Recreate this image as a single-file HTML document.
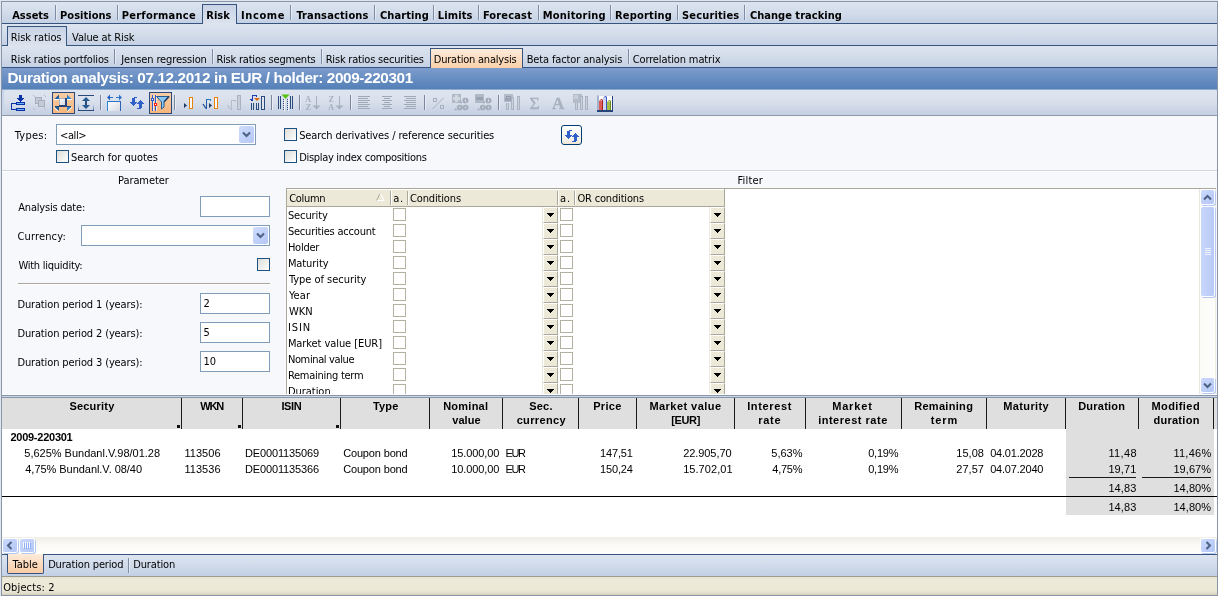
<!DOCTYPE html><html><head><meta charset='utf-8'><title>Duration analysis</title><style>
html,body{margin:0;padding:0;}
body{width:1218px;height:596px;overflow:hidden;background:#fff;position:relative;}
#root{will-change:transform;position:absolute;left:0;top:0;width:1218px;height:596px;overflow:hidden;background:#fff;}
.a{position:absolute;}
.t{position:absolute;white-space:nowrap;line-height:13px;font-size:11px;color:#000;font-family:'DejaVu Sans Condensed','DejaVu Sans','Liberation Sans',sans-serif;letter-spacing:-0.1px;}
.tb{position:absolute;white-space:nowrap;line-height:13px;font-size:11px;color:#000;font-weight:bold;font-family:'DejaVu Sans Condensed','DejaVu Sans','Liberation Sans',sans-serif;letter-spacing:0.2px;}
.ar{position:absolute;white-space:nowrap;line-height:13px;font-size:11px;color:#000;font-family:'Liberation Sans',sans-serif;}
.arb{position:absolute;white-space:nowrap;line-height:13px;font-size:11px;color:#000;font-weight:bold;font-family:'Liberation Sans',sans-serif;letter-spacing:0.4px;}
.r{text-align:right;}
.c{text-align:center;}
.band{position:absolute;left:2px;width:1215px;height:21px;background:linear-gradient(#dce4ef,#d2dcea 50%,#c4d0e4);}
.dl{position:absolute;left:2px;width:1215px;height:1px;background:#37547f;}
.sep{position:absolute;width:1px;height:15px;background:#7e8ca6;box-shadow:1px 0 0 rgba(255,255,255,.45);}
.inp{position:absolute;box-sizing:border-box;border:1px solid #7f9db9;background:#fff;}
.cb{position:absolute;box-sizing:border-box;width:13px;height:13px;border:1px solid #1c5180;background:linear-gradient(135deg,#dcdcd7,#ffffff);}
.gcb{position:absolute;box-sizing:border-box;width:13px;height:13px;border:1px solid #b4b1a1;background:#fff;}
.dd{position:absolute;width:15px;height:17px;border-radius:2px;background:linear-gradient(135deg,#cfdcfd,#b4c7f5);}
.gdd{position:absolute;box-sizing:border-box;width:15px;height:16px;background:#ece9d8;border-left:1px solid #fff;border-top:1px solid #fff;border-bottom:1px solid #aca899;border-right:1px solid #aca899;box-shadow:-1px 0 0 #ece9d8;}
.hs{position:absolute;top:398px;width:1px;height:31px;background:#1a1a1a;}
.mk{position:absolute;top:425px;width:3px;height:3px;background:#111;}
svg{position:absolute;overflow:visible;}
</style></head><body><div id='root'>
<div class='a' style='left:0px;top:0px;width:1218px;height:596px;background:#dfe5ef;'></div>
<div class='a' style='left:1px;top:1px;width:1217px;height:595px;background:#8a96a8;'></div>
<div class='a' style='left:2px;top:2px;width:1215px;height:593px;background:#fff;'></div>
<div class='band' style='top:2px'></div>
<div class='dl' style='top:23px'></div>
<div class='band' style='top:24px'></div>
<div class='dl' style='top:45px'></div>
<div class='band' style='top:46px'></div>
<div class='dl' style='top:67px'></div>
<div class='a' style='left:202px;top:4px;width:35px;height:20px;box-sizing:border-box;border:1px solid #37547f;border-bottom:none;border-radius:0;background:linear-gradient(#c8d3e5,#dce3ee)'></div>
<div class='tb' style='left:12.2px;letter-spacing:0.0px;top:9px;'>Assets</div>
<div class='tb' style='left:60.0px;letter-spacing:0.038px;top:9px;'>Positions</div>
<div class='tb' style='left:121.8px;letter-spacing:0.24px;top:9px;'>Performance</div>
<div class='tb' style='left:206.3px;letter-spacing:0.033px;top:9px;'>Risk</div>
<div class='tb' style='left:241.0px;letter-spacing:0.62px;top:9px;'>Income</div>
<div class='tb' style='left:296.4px;letter-spacing:0.145px;top:9px;'>Transactions</div>
<div class='tb' style='left:380.0px;letter-spacing:0.086px;top:9px;'>Charting</div>
<div class='tb' style='left:437.8px;letter-spacing:0.12px;top:9px;'>Limits</div>
<div class='tb' style='left:482.9px;letter-spacing:0.157px;top:9px;'>Forecast</div>
<div class='tb' style='left:542.8px;letter-spacing:0.2px;top:9px;'>Monitoring</div>
<div class='tb' style='left:614.9px;letter-spacing:0.2px;top:9px;'>Reporting</div>
<div class='tb' style='left:682.0px;letter-spacing:0.156px;top:9px;'>Securities</div>
<div class='tb' style='left:749.9px;letter-spacing:0.029px;top:9px;'>Change tracking</div>
<div class='sep' style='left:55px;top:5px'></div>
<div class='sep' style='left:117px;top:5px'></div>
<div class='sep' style='left:290px;top:5px'></div>
<div class='sep' style='left:374px;top:5px'></div>
<div class='sep' style='left:433px;top:5px'></div>
<div class='sep' style='left:478px;top:5px'></div>
<div class='sep' style='left:538px;top:5px'></div>
<div class='sep' style='left:610px;top:5px'></div>
<div class='sep' style='left:677px;top:5px'></div>
<div class='sep' style='left:744px;top:5px'></div>
<div class='a' style='left:7px;top:26px;width:60px;height:20px;box-sizing:border-box;border:1px solid #37547f;border-bottom:none;border-radius:0;background:linear-gradient(#c8d3e5,#dce3ee)'></div>
<div class='a' style='left:8px;top:45px;width:58px;height:1px;background:#dde4ef;'></div>
<div class='a' style='left:203px;top:23px;width:33px;height:1px;background:#dde4ef;'></div>
<div class='t' style='left:10.8px;letter-spacing:-0.09px;top:31px;'>Risk ratios</div>
<div class='t' style='left:72.1px;letter-spacing:-0.125px;top:31px;'>Value at Risk</div>
<div class='a' style='left:430px;top:48px;width:93px;height:20px;box-sizing:border-box;border:1px solid #37547f;border-bottom:none;border-radius:0;background:linear-gradient(#fdecdc,#f9cfa9)'></div>
<div class='t' style='left:10.8px;letter-spacing:-0.148px;top:53px;'>Risk ratios portfolios</div>
<div class='t' style='left:121.3px;letter-spacing:-0.119px;top:53px;'>Jensen regression</div>
<div class='t' style='left:216.4px;letter-spacing:-0.211px;top:53px;'>Risk ratios segments</div>
<div class='t' style='left:325.7px;letter-spacing:-0.195px;top:53px;'>Risk ratios securities</div>
<div class='t' style='left:433.8px;letter-spacing:-0.212px;top:53px;'>Duration analysis</div>
<div class='t' style='left:526.7px;letter-spacing:-0.132px;top:53px;'>Beta factor analysis</div>
<div class='t' style='left:632.7px;letter-spacing:-0.124px;top:53px;'>Correlation matrix</div>
<div class='sep' style='left:114px;top:49px'></div>
<div class='sep' style='left:212px;top:49px'></div>
<div class='sep' style='left:321px;top:49px'></div>
<div class='sep' style='left:628px;top:49px'></div>
<div class='a' style='left:2px;top:68px;width:1215px;height:21px;background:linear-gradient(#7c9ccc,#5480b8);'></div>
<div class='a' style='left:7.4px;letter-spacing:-0.368px;top:69px;line-height:17px;font-size:15.3px;font-weight:bold;color:#fff;white-space:nowrap;font-family:"Liberation Sans",sans-serif'>Duration analysis: 07.12.2012 in EUR / holder: 2009-220301</div>
<div class='a' style='left:2px;top:89px;width:1215px;height:27px;background:#c9d6ea;'></div>
<div class='a' style='left:2px;top:89px;width:1215px;height:1px;background:#8fa9d0;'></div>
<div class='a' style='left:4px;top:90px;width:1213px;height:25px;border-radius:3px;background:linear-gradient(#dfe5ef,#d9e0ec 45%,#c4cfe2)'></div>
<div class='a' style='left:2px;top:115px;width:1215px;height:1px;background:#8f99aa;'></div>
<svg style='left:0;top:0' width='1218' height='120' viewBox='0 0 1218 120'><defs><linearGradient id='og' x1='0' y1='0' x2='0' y2='1'><stop offset='0' stop-color='#f7cda6'/><stop offset='1' stop-color='#f8b57c'/></linearGradient><linearGradient id='wg' x1='0' y1='0' x2='1' y2='1'><stop offset='0' stop-color='#ffffff'/><stop offset='1' stop-color='#d5d8e2'/></linearGradient><linearGradient id='bf' x1='0' y1='0' x2='0' y2='1'><stop offset='0' stop-color='#aac0e8' stop-opacity='0'/><stop offset='1' stop-color='#2b4a7c'/></linearGradient></defs><g shape-rendering='crispEdges'><rect x='100' y='95' width='1' height='15' fill='#7b879c' /><rect x='101' y='95' width='1' height='15' fill='#e8edf5' /><rect x='174' y='95' width='1' height='15' fill='#7b879c' /><rect x='175' y='95' width='1' height='15' fill='#e8edf5' /><rect x='271' y='95' width='1' height='15' fill='#7b879c' /><rect x='272' y='95' width='1' height='15' fill='#e8edf5' /><rect x='299' y='95' width='1' height='15' fill='#7b879c' /><rect x='300' y='95' width='1' height='15' fill='#e8edf5' /><rect x='350' y='95' width='1' height='15' fill='#7b879c' /><rect x='351' y='95' width='1' height='15' fill='#e8edf5' /><rect x='424' y='95' width='1' height='15' fill='#7b879c' /><rect x='425' y='95' width='1' height='15' fill='#e8edf5' /><rect x='498' y='95' width='1' height='15' fill='#7b879c' /><rect x='499' y='95' width='1' height='15' fill='#e8edf5' /><rect x='52' y='92' width='23' height='22' fill='#2b4a7c' /><rect x='53' y='93' width='21' height='20' fill='url(#og)' /><rect x='149' y='92' width='23' height='22' fill='#2b4a7c' /><rect x='150' y='93' width='21' height='20' fill='url(#og)' /><rect x='19' y='95' width='3' height='3' fill='#0a32a8' /><path d='M17 98 h7 l-3.5 4 z' fill='#0a32a8' stroke='none' stroke-width='1' /><rect x='20' y='98' width='1' height='4' fill='#0a32a8' /><rect x='16' y='102' width='9' height='3' fill='#0a32a8' /><rect x='17' y='103' width='7' height='1' fill='#6fb0ff' /><rect x='16' y='108' width='9' height='3' fill='#0a32a8' /><rect x='17' y='109' width='7' height='1' fill='#6fb0ff' /><rect x='11' y='103' width='5' height='1' fill='#0a32a8' /><rect x='11' y='103' width='1' height='7' fill='#0a32a8' /><rect x='11' y='109' width='5' height='1' fill='#0a32a8' /><rect x='35' y='97' width='7' height='7' fill='#a5aebc' /><rect x='36' y='98' width='5' height='5' fill='#c4cbd6' /><rect x='38' y='100' width='7' height='7' fill='#a5aebc' /><rect x='39' y='101' width='5' height='5' fill='#c4cbd6' /><rect x='38' y='100' width='4' height='1' fill='#a5aebc' /><rect x='38' y='100' width='1' height='4' fill='#a5aebc' /><rect x='33' y='95' width='1' height='1' fill='#b3bbc8' /><rect x='34' y='96' width='1' height='1' fill='#b3bbc8' /><rect x='44' y='95' width='1' height='1' fill='#b3bbc8' /><rect x='45' y='96' width='1' height='1' fill='#b3bbc8' /><rect x='33' y='108' width='1' height='1' fill='#b3bbc8' /><rect x='34' y='109' width='1' height='1' fill='#b3bbc8' /><rect x='44' y='108' width='1' height='1' fill='#b3bbc8' /><rect x='45' y='109' width='1' height='1' fill='#b3bbc8' /><rect x='59' y='98' width='8' height='9' fill='#27457a' /><rect x='59' y='98' width='6' height='7' fill='url(#wg)' /><rect x='59' y='98' width='6' height='1' fill='#a9b4c8' /><rect x='59' y='98' width='1' height='7' fill='#a9b4c8' /><rect x='55' y='106' width='4' height='1' fill='#27457a' /><rect x='67' y='106' width='4' height='1' fill='#27457a' /><rect x='54' y='99' width='5' height='1' fill='#ffffff' /><rect x='67' y='99' width='5' height='1' fill='#ffffff' /></g><path d='M59 94.5 v4.5 h-4.5 z' fill='#1d5f9e' stroke='none' stroke-width='1' /><path d='M67 94.5 v4.5 h4.5 z' fill='#2a86c8' stroke='none' stroke-width='1' /><path d='M54.5 107 h4.5 v4 z' fill='#1d5f9e' stroke='none' stroke-width='1' /><path d='M71.5 107 h-4.5 v4 z' fill='#2a86c8' stroke='none' stroke-width='1' /><path d='M54 107.5 l4.5 4' fill='none' stroke='#fff' stroke-width='1' /><path d='M72 107.5 l-4.5 4' fill='none' stroke='#fff' stroke-width='1' /><g shape-rendering='crispEdges'><rect x='78' y='95' width='16' height='1' fill='#2b4a7c' /><rect x='85' y='99' width='2' height='8' fill='#2b4a7c' /></g><path d='M86 97 l4 4 h-8 z' fill='#24588f' stroke='none' stroke-width='1' /><path d='M86 109 l4 -4 h-8 z' fill='#24588f' stroke='none' stroke-width='1' /><g shape-rendering='crispEdges'><rect x='78' y='103' width='1' height='8' fill='url(#bf)' /><rect x='93' y='103' width='1' height='8' fill='url(#bf)' /><rect x='78' y='110' width='16' height='1' fill='#2b4a7c' /><rect x='107' y='101' width='14' height='1' fill='#2a74c6' /><rect x='107' y='101' width='1' height='10' fill='#2a8ad6' /><rect x='120' y='101' width='1' height='10' fill='#2a62b6' /><rect x='108' y='102' width='12' height='9' fill='url(#wg)' /><rect x='108' y='97' width='5' height='1' fill='#2a74c6' /><rect x='116' y='97' width='5' height='1' fill='#2a74c6' /></g><path d='M107 97.5 l3 -3 v6 z' fill='#2a62c0' stroke='none' stroke-width='1' /><path d='M122 97.5 l-3 -3 v6 z' fill='#2a74c6' stroke='none' stroke-width='1' /><g shape-rendering='crispEdges'><rect x='134' y='97' width='3' height='1' fill='#2f5fc8'/><rect x='132' y='98' width='3' height='4' fill='#2f5fc8'/><rect x='130' y='102' width='7' height='1' fill='#2f5fc8'/><rect x='131' y='103' width='5' height='1' fill='#2f5fc8'/><rect x='132' y='104' width='3' height='1' fill='#2f5fc8'/><rect x='133' y='105' width='1' height='1' fill='#2f5fc8'/><rect x='140' y='100' width='1' height='1' fill='#2f5fc8'/><rect x='139' y='101' width='3' height='1' fill='#2f5fc8'/><rect x='138' y='102' width='5' height='1' fill='#2f5fc8'/><rect x='137' y='103' width='7' height='1' fill='#2f5fc8'/><rect x='139' y='104' width='3' height='4' fill='#2f5fc8'/><rect x='137' y='108' width='4' height='1' fill='#2f5fc8'/></g><g shape-rendering='crispEdges'><rect x='152' y='95' width='1' height='16' fill='#2a5ad0' /><rect x='153' y='95' width='1' height='16' fill='#fbe6d2' /><rect x='155' y='95' width='1' height='16' fill='#2a5ad0' /><rect x='156' y='95' width='1' height='16' fill='#fbe6d2' /><rect x='151' y='98' width='3' height='3' fill='#2a5ad0' /><rect x='152' y='99' width='1' height='1' fill='#fff' /><rect x='154' y='103' width='3' height='3' fill='#ff2010' /><rect x='155' y='104' width='1' height='1' fill='#fff' /></g><path d='M156.5 96.5 h12.5 l-5 5.5 v5 l-2.5 2 v-7 z' fill='#8cc6f2' stroke='#235a92' stroke-width='1' /><path d='M164 102 l5 -5.5' fill='none' stroke='#1a3a66' stroke-width='1.5' /><g shape-rendering='crispEdges'><rect x='189' y='97' width='4' height='12' fill='#e8820c' /><rect x='190' y='98' width='2' height='10' fill='#fbfbff' /></g><path d='M184 103 l3 2.5 l-3 2.5 z' fill='#1f3a68' stroke='none' stroke-width='1' /><g shape-rendering='crispEdges'><rect x='214' y='97' width='4' height='12' fill='#e8820c' /><rect x='215' y='98' width='2' height='10' fill='#fbfbff' /><rect x='206' y='99' width='1' height='10' fill='#1f5aa8' /><rect x='206' y='99' width='5' height='1' fill='#1f7ab8' /><rect x='210' y='99' width='1' height='2' fill='#1f7ab8' /></g><path d='M203 104 l3 4.5' fill='none' stroke='#1f4a98' stroke-width='1.3' /><path d='M209 103 l3 2.5 l-3 2.5 z' fill='#1f3a68' stroke='none' stroke-width='1' /><g shape-rendering='crispEdges'><rect x='231' y='100' width='1' height='10' fill='#b4bcc8' /><rect x='231' y='100' width='5' height='1' fill='#b4bcc8' /><rect x='235' y='100' width='1' height='2' fill='#b4bcc8' /><rect x='237' y='95' width='4' height='15' fill='#aab3c1' /><rect x='238' y='96' width='2' height='13' fill='#c8ced9' /></g><path d='M227.5 105 l3 4.5' fill='none' stroke='#b4bcc8' stroke-width='1.2' /><g shape-rendering='crispEdges'><rect x='251' y='103' width='1' height='7' fill='#2b4a7c' /><rect x='253' y='103' width='1' height='7' fill='#2b4a7c' /><rect x='256' y='103' width='1' height='7' fill='#2b4a7c' /><rect x='258' y='103' width='1' height='7' fill='#2b4a7c' /><rect x='256' y='109' width='3' height='1' fill='#2b4a7c' /><rect x='261' y='96' width='4' height='14' fill='#2b4a7c' /><rect x='262' y='97' width='2' height='12' fill='#dfe5f0' /><rect x='252' y='95' width='1' height='6' fill='#1a3ab8' /><rect x='252' y='95' width='5' height='1' fill='#1a3ab8' /><rect x='256' y='95' width='1' height='2' fill='#1a3ab8' /><rect x='250' y='99' width='2' height='1' fill='#1a3ab8' /><rect x='251' y='100' width='1' height='1' fill='#1a3ab8' /></g><path d='M254 98 h6 l-3 3 z' fill='#d8690c' stroke='none' stroke-width='1' /><g shape-rendering='crispEdges'><rect x='278' y='96' width='1' height='13' fill='#2b4a7c' /><rect x='280' y='96' width='1' height='13' fill='#2b4a7c' /><rect x='290' y='96' width='1' height='13' fill='#2b4a7c' /><rect x='292' y='96' width='1' height='13' fill='#2b4a7c' /><rect x='283' y='99' width='1' height='1' fill='#2b4a7c' /><rect x='283' y='101' width='1' height='1' fill='#2b4a7c' /><rect x='283' y='103' width='1' height='1' fill='#2b4a7c' /><rect x='283' y='105' width='1' height='1' fill='#2b4a7c' /><rect x='283' y='107' width='1' height='1' fill='#2b4a7c' /><rect x='283' y='109' width='1' height='1' fill='#2b4a7c' /><rect x='284' y='98' width='1' height='13' fill='#f4f6fa' /><rect x='287' y='99' width='1' height='1' fill='#2b4a7c' /><rect x='287' y='101' width='1' height='1' fill='#2b4a7c' /><rect x='287' y='103' width='1' height='1' fill='#2b4a7c' /><rect x='287' y='105' width='1' height='1' fill='#2b4a7c' /><rect x='287' y='107' width='1' height='1' fill='#2b4a7c' /><rect x='287' y='109' width='1' height='1' fill='#2b4a7c' /><rect x='288' y='98' width='1' height='13' fill='#f4f6fa' /></g><path d='M281.5 94.5 h8 l-4 4.5 z' fill='#55c010' stroke='none' stroke-width='1' /><text x='305' y='101.5' font-family="Liberation Serif" font-size='8.5' font-weight='bold' fill='#a7b0be' >A</text><text x='305.5' y='109.5' font-family="Liberation Serif" font-size='8.5' font-weight='bold' fill='#a7b0be' >Z</text><text x='328.5' y='101.5' font-family="Liberation Serif" font-size='8.5' font-weight='bold' fill='#a7b0be' >Z</text><text x='328' y='109.5' font-family="Liberation Serif" font-size='8.5' font-weight='bold' fill='#a7b0be' >A</text><rect x='316' y='96' width='1' height='10' fill='#a7b0be' shape-rendering='crispEdges'/><path d='M312.5 105.5 h8 l-4 4 z' fill='#a7b0be' stroke='none' stroke-width='1' /><rect x='339' y='96' width='1' height='10' fill='#a7b0be' shape-rendering='crispEdges'/><path d='M335.5 105.5 h8 l-4 4 z' fill='#a7b0be' stroke='none' stroke-width='1' /><g shape-rendering='crispEdges'><rect x='358' y='96' width='12' height='1' fill='#9ea8b7' /><rect x='382' y='96' width='10' height='1' fill='#9ea8b7' /><rect x='404' y='96' width='12' height='1' fill='#9ea8b7' /><rect x='358' y='98' width='10' height='1' fill='#9ea8b7' /><rect x='384' y='98' width='6' height='1' fill='#9ea8b7' /><rect x='406' y='98' width='10' height='1' fill='#9ea8b7' /><rect x='358' y='100' width='12' height='1' fill='#9ea8b7' /><rect x='382' y='100' width='10' height='1' fill='#9ea8b7' /><rect x='404' y='100' width='12' height='1' fill='#9ea8b7' /><rect x='358' y='102' width='10' height='1' fill='#9ea8b7' /><rect x='384' y='102' width='6' height='1' fill='#9ea8b7' /><rect x='406' y='102' width='10' height='1' fill='#9ea8b7' /><rect x='358' y='104' width='12' height='1' fill='#9ea8b7' /><rect x='382' y='104' width='10' height='1' fill='#9ea8b7' /><rect x='404' y='104' width='12' height='1' fill='#9ea8b7' /><rect x='358' y='106' width='10' height='1' fill='#9ea8b7' /><rect x='384' y='106' width='6' height='1' fill='#9ea8b7' /><rect x='406' y='106' width='10' height='1' fill='#9ea8b7' /><rect x='358' y='108' width='12' height='1' fill='#9ea8b7' /><rect x='382' y='108' width='10' height='1' fill='#9ea8b7' /><rect x='404' y='108' width='12' height='1' fill='#9ea8b7' /></g><path d='M432.5 109 l11 -11' fill='none' stroke='#a7b0be' stroke-width='1' /><rect x='433.5' y='98.5' width='3' height='3' fill='none' stroke='#a7b0be'/><rect x='440.5' y='105.5' width='3' height='3' fill='none' stroke='#a7b0be'/><rect x='452' y='94' width='9' height='9' fill='#b0b9c6' shape-rendering='crispEdges'/><rect x='453' y='97' width='7' height='3' fill='#d2d8e1' shape-rendering='crispEdges'/><rect x='455' y='95' width='3' height='7' fill='#d2d8e1' shape-rendering='crispEdges'/><text x='460' y='102.8' font-family="Liberation Sans" font-size='8' font-weight='bold' fill='#a3acba' stroke='#a3acba' stroke-width='0.7'>.</text><text x='462.5' y='102.8' font-family="Liberation Sans" font-size='8' font-weight='bold' fill='#a3acba' stroke='#a3acba' stroke-width='0.7' textLength='6' lengthAdjust='spacingAndGlyphs'>0</text><text x='454.5' y='110.3' font-family="Liberation Sans" font-size='8' font-weight='bold' fill='#a3acba' stroke='#a3acba' stroke-width='0.7'>.</text><text x='457' y='110.3' font-family="Liberation Sans" font-size='8' font-weight='bold' fill='#a3acba' stroke='#a3acba' stroke-width='0.7' textLength='11.5' lengthAdjust='spacingAndGlyphs'>00</text><rect x='475' y='94' width='9' height='9' fill='#b0b9c6' shape-rendering='crispEdges'/><rect x='476' y='97' width='7' height='3' fill='#98a2b2' shape-rendering='crispEdges'/><text x='483' y='102.8' font-family="Liberation Sans" font-size='8' font-weight='bold' fill='#a3acba' stroke='#a3acba' stroke-width='0.7'>.</text><text x='485.5' y='102.8' font-family="Liberation Sans" font-size='8' font-weight='bold' fill='#a3acba' stroke='#a3acba' stroke-width='0.7' textLength='6' lengthAdjust='spacingAndGlyphs'>0</text><text x='477.5' y='110.3' font-family="Liberation Sans" font-size='8' font-weight='bold' fill='#a3acba' stroke='#a3acba' stroke-width='0.7'>.</text><text x='480' y='110.3' font-family="Liberation Sans" font-size='8' font-weight='bold' fill='#a3acba' stroke='#a3acba' stroke-width='0.7' textLength='11.5' lengthAdjust='spacingAndGlyphs'>00</text><g shape-rendering='crispEdges'><rect x='504' y='94' width='9' height='8' fill='#b4bcc9' /><rect x='506' y='96' width='5' height='1' fill='#8f99a9' /><rect x='506' y='96' width='1' height='3' fill='#8f99a9' /><rect x='510' y='96' width='1' height='3' fill='#8f99a9' /><rect x='505' y='98' width='7' height='3' fill='#9aa4b3' /><rect x='506' y='103' width='3' height='7' fill='#aab3c1' /><rect x='507' y='103' width='1' height='6' fill='#cbd1db' /><rect x='511' y='97' width='3' height='13' fill='#aab3c1' /><rect x='512' y='98' width='1' height='11' fill='#cbd1db' /><rect x='517' y='96' width='3' height='14' fill='#aab3c1' /><rect x='518' y='97' width='1' height='12' fill='#cbd1db' /><rect x='573' y='94' width='9' height='9' fill='#b4bcc9' /><rect x='574' y='95' width='4' height='4' fill='#c9cfd9' /><rect x='575' y='103' width='3' height='7' fill='#aab3c1' /><rect x='576' y='103' width='1' height='6' fill='#cbd1db' /><rect x='580' y='96' width='3' height='14' fill='#aab3c1' /><rect x='581' y='97' width='1' height='12' fill='#cbd1db' /><rect x='585' y='96' width='3' height='14' fill='#aab3c1' /><rect x='586' y='97' width='1' height='12' fill='#cbd1db' /></g><text x='529.5' y='108.6' font-family="Liberation Serif" font-size='17.5' font-weight='normal' fill='#a7b0be' stroke='#a7b0be' stroke-width='0.3'>&#931;</text><text x='552' y='108.8' font-family="Liberation Serif" font-size='17' font-weight='bold' fill='#a9b2c0' stroke='#a9b2c0' stroke-width='0.4'>A</text><g shape-rendering='crispEdges'><rect x='597' y='95' width='16' height='17' fill='#ffffff' /><rect x='597' y='95' width='2' height='16' fill='#a3b3cd' /><rect x='597' y='110' width='16' height='2' fill='#27457a' /><rect x='612' y='96' width='1' height='15' fill='#27457a' /><rect x='598' y='95' width='15' height='1' fill='#d5dcea' /><rect x='599' y='101' width='3' height='9' fill='#dd5a55' /><rect x='602' y='100' width='1' height='10' fill='#a82424' /><rect x='603' y='98' width='3' height='12' fill='#cdd6f6' /><rect x='606' y='97' width='1' height='13' fill='#3a56c0' /><rect x='607' y='102' width='3' height='8' fill='#a6bf45' /><rect x='610' y='101' width='1' height='9' fill='#6c861c' /></g><path d='M599 101 l2 -2 h1 l1 1 z' fill='#c23a3a' stroke='none' stroke-width='1' /><path d='M603 98 l2 -2 h1 l1 1 z' fill='#4d6ad2' stroke='none' stroke-width='1' /><path d='M607 102 l2 -2 h1 l1 1 z' fill='#86a62a' stroke='none' stroke-width='1' /></svg>
<div class='a' style='left:2px;top:116px;width:1215px;height:278px;background:#f6f8fc;'></div>
<div class='a' style='left:2px;top:170px;width:1215px;height:1px;background:#cfd6e1;'></div>
<div class='a' style='left:2px;top:171px;width:1215px;height:1px;background:#ffffff;'></div>
<div class='t' style='left:14.8px;letter-spacing:0.24px;top:129px;'>Types:</div>
<div class='inp' style='left:56px;top:124px;width:200px;height:21px'></div>
<div class='t' style='left:60.1px;letter-spacing:-0.425px;top:129px;'>&lt;all&gt;</div>
<div class='dd' style='left:239px;top:126px'></div>
<svg style='left:239px;top:126px' width='15' height='17' viewBox='0 0 15 17'><path d='M4 6.5 L7.5 10 L11 6.5' fill='none' stroke='#4d6185' stroke-width='2'/></svg>
<div class='cb' style='left:56px;top:150px'></div>
<div class='t' style='left:70.9px;letter-spacing:-0.031px;top:151px;'>Search for quotes</div>
<div class='cb' style='left:284px;top:128px'></div>
<div class='t' style='left:299.15px;letter-spacing:-0.111px;top:129px;'>Search derivatives / reference securities</div>
<div class='cb' style='left:284px;top:150px'></div>
<div class='t' style='left:299.15px;letter-spacing:-0.3px;top:151px;'>Display index compositions</div>
<div class='a' style='left:561px;top:125px;width:21px;height:20px;box-sizing:border-box;border:1px solid #003c74;border-radius:3px;background:linear-gradient(#ffffff,#f1efe6 85%,#f3e3cf)'></div>
<svg style='left:0;top:0' width='700' height='200' viewBox='0 0 700 200'><g shape-rendering='crispEdges'><rect x='569' y='130' width='3' height='1' fill='#2f5fc8'/><rect x='567' y='131' width='3' height='4' fill='#2f5fc8'/><rect x='565' y='135' width='7' height='1' fill='#2f5fc8'/><rect x='566' y='136' width='5' height='1' fill='#2f5fc8'/><rect x='567' y='137' width='3' height='1' fill='#2f5fc8'/><rect x='568' y='138' width='1' height='1' fill='#2f5fc8'/><rect x='575' y='133' width='1' height='1' fill='#2f5fc8'/><rect x='574' y='134' width='3' height='1' fill='#2f5fc8'/><rect x='573' y='135' width='5' height='1' fill='#2f5fc8'/><rect x='572' y='136' width='7' height='1' fill='#2f5fc8'/><rect x='574' y='137' width='3' height='4' fill='#2f5fc8'/><rect x='572' y='141' width='4' height='1' fill='#2f5fc8'/></g></svg>
<div class='t' style='left:118.0px;letter-spacing:-0.075px;top:174px;'>Parameter</div>
<div class='t' style='left:737.4px;letter-spacing:0.2px;top:174px;'>Filter</div>
<div class='t' style='left:18.3px;letter-spacing:-0.2px;top:201px;'>Analysis date:</div>
<div class='inp' style='left:200px;top:196px;width:70px;height:21px'></div>
<div class='t' style='left:17.4px;letter-spacing:0.162px;top:230px;'>Currency:</div>
<div class='inp' style='left:81px;top:225px;width:189px;height:21px'></div>
<div class='dd' style='left:253px;top:227px'></div>
<svg style='left:253px;top:227px' width='15' height='17' viewBox='0 0 15 17'><path d='M4 6.5 L7.5 10 L11 6.5' fill='none' stroke='#4d6185' stroke-width='2'/></svg>
<div class='t' style='left:18.4px;letter-spacing:-0.243px;top:259px;'>With liquidity:</div>
<div class='cb' style='left:257px;top:258px'></div>
<div class='a' style='left:18px;top:283px;width:252px;height:1px;background:#aca899;'></div>
<div class='a' style='left:18px;top:284px;width:252px;height:1px;background:#ffffff;'></div>
<div class='t' style='left:17.4px;letter-spacing:-0.136px;top:298px;'>Duration period 1 (years):</div>
<div class='inp' style='left:200px;top:293px;width:70px;height:21px'></div>
<div class='t' style='left:203.5px;top:297px;'>2</div>
<div class='t' style='left:17.4px;letter-spacing:-0.136px;top:327px;'>Duration period 2 (years):</div>
<div class='inp' style='left:200px;top:322px;width:70px;height:21px'></div>
<div class='t' style='left:203.5px;top:326px;'>5</div>
<div class='t' style='left:17.4px;letter-spacing:-0.136px;top:356px;'>Duration period 3 (years):</div>
<div class='inp' style='left:200px;top:351px;width:70px;height:21px'></div>
<div class='t' style='left:203.5px;top:355px;'>10</div>
<div class='a' style='left:286px;top:188px;width:930px;height:206px;overflow:hidden'>
<div class='a' style='left:0;top:0;width:930px;height:1px;background:#aca899'></div>
<div class='a' style='left:0;top:0;width:1px;height:206px;background:#aca899'></div>
<div class='a' style='left:1px;top:1px;width:912px;height:205px;background:#fff'></div>
<div class='a' style='left:1px;top:1px;width:437px;height:17px;background:#ece9d8'></div>
<div class='a' style='left:1px;top:18px;width:438px;height:1px;background:#aca899'></div>
<div class='a' style='left:438px;top:1px;width:1px;height:205px;background:#aca899'></div>
<div class='a' style='left:104px;top:3px;width:1px;height:14px;background:#aca899'></div>
<div class='a' style='left:105px;top:3px;width:1px;height:14px;background:#fff'></div>
<div class='a' style='left:121px;top:3px;width:1px;height:14px;background:#aca899'></div>
<div class='a' style='left:122px;top:3px;width:1px;height:14px;background:#fff'></div>
<div class='a' style='left:271px;top:3px;width:1px;height:14px;background:#aca899'></div>
<div class='a' style='left:272px;top:3px;width:1px;height:14px;background:#fff'></div>
<div class='a' style='left:288px;top:3px;width:1px;height:14px;background:#aca899'></div>
<div class='a' style='left:289px;top:3px;width:1px;height:14px;background:#fff'></div>
<div class='t' style='left:3.15px;letter-spacing:-0.29px;top:4px;'>Column</div>
<div class='t' style='left:107.15px;letter-spacing:0.9px;top:4px;'>a.</div>
<div class='t' style='left:124.0px;letter-spacing:-0.15px;top:4px;'>Conditions</div>
<div class='t' style='left:274.0px;letter-spacing:0.9px;top:4px;'>a.</div>
<div class='t' style='left:291.4px;letter-spacing:-0.167px;top:4px;'>OR conditions</div>
<svg style='left:90px;top:5px' width='9' height='8' viewBox='0 0 9 8'><path d='M4 0.5 L8 7 M0.5 7.5 H8.5' stroke='#fff' stroke-width='1.2' fill='none'/><path d='M0.5 7.5 L4 0.5' stroke='#aca899' stroke-width='1' fill='none'/></svg>
<div class='a' style='left:1px;top:1px;width:437px;height:1px;background:#fff'></div>
<div class='t' style='left:1.9px;letter-spacing:-0.1px;top:21px;'>Security</div>
<div class='gcb' style='left:107px;top:20px'></div>
<div class='gcb' style='left:274px;top:20px'></div>
<div class='gdd' style='left:257px;top:19px'><svg style='left:3px;top:5px' width='7' height='4' viewBox='0 0 7 4' shape-rendering='crispEdges'><path d='M0 0h7v1h-7zM1 1h5v1h-5zM2 2h3v1h-3zM3 3h1v1h-1z' fill='#000'/></svg></div>
<div class='gdd' style='left:424px;top:19px'><svg style='left:3px;top:5px' width='7' height='4' viewBox='0 0 7 4' shape-rendering='crispEdges'><path d='M0 0h7v1h-7zM1 1h5v1h-5zM2 2h3v1h-3zM3 3h1v1h-1z' fill='#000'/></svg></div>
<div class='t' style='left:1.9px;letter-spacing:-0.212px;top:37px;'>Securities account</div>
<div class='gcb' style='left:107px;top:36px'></div>
<div class='gcb' style='left:274px;top:36px'></div>
<div class='gdd' style='left:257px;top:35px'><svg style='left:3px;top:5px' width='7' height='4' viewBox='0 0 7 4' shape-rendering='crispEdges'><path d='M0 0h7v1h-7zM1 1h5v1h-5zM2 2h3v1h-3zM3 3h1v1h-1z' fill='#000'/></svg></div>
<div class='gdd' style='left:424px;top:35px'><svg style='left:3px;top:5px' width='7' height='4' viewBox='0 0 7 4' shape-rendering='crispEdges'><path d='M0 0h7v1h-7zM1 1h5v1h-5zM2 2h3v1h-3zM3 3h1v1h-1z' fill='#000'/></svg></div>
<div class='t' style='left:1.9px;letter-spacing:-0.24px;top:53px;'>Holder</div>
<div class='gcb' style='left:107px;top:52px'></div>
<div class='gcb' style='left:274px;top:52px'></div>
<div class='gdd' style='left:257px;top:51px'><svg style='left:3px;top:5px' width='7' height='4' viewBox='0 0 7 4' shape-rendering='crispEdges'><path d='M0 0h7v1h-7zM1 1h5v1h-5zM2 2h3v1h-3zM3 3h1v1h-1z' fill='#000'/></svg></div>
<div class='gdd' style='left:424px;top:51px'><svg style='left:3px;top:5px' width='7' height='4' viewBox='0 0 7 4' shape-rendering='crispEdges'><path d='M0 0h7v1h-7zM1 1h5v1h-5zM2 2h3v1h-3zM3 3h1v1h-1z' fill='#000'/></svg></div>
<div class='t' style='left:1.9px;letter-spacing:-0.086px;top:69px;'>Maturity</div>
<div class='gcb' style='left:107px;top:68px'></div>
<div class='gcb' style='left:274px;top:68px'></div>
<div class='gdd' style='left:257px;top:67px'><svg style='left:3px;top:5px' width='7' height='4' viewBox='0 0 7 4' shape-rendering='crispEdges'><path d='M0 0h7v1h-7zM1 1h5v1h-5zM2 2h3v1h-3zM3 3h1v1h-1z' fill='#000'/></svg></div>
<div class='gdd' style='left:424px;top:67px'><svg style='left:3px;top:5px' width='7' height='4' viewBox='0 0 7 4' shape-rendering='crispEdges'><path d='M0 0h7v1h-7zM1 1h5v1h-5zM2 2h3v1h-3zM3 3h1v1h-1z' fill='#000'/></svg></div>
<div class='t' style='left:2.9px;letter-spacing:-0.027px;top:85px;'>Type of security</div>
<div class='gcb' style='left:107px;top:84px'></div>
<div class='gcb' style='left:274px;top:84px'></div>
<div class='gdd' style='left:257px;top:83px'><svg style='left:3px;top:5px' width='7' height='4' viewBox='0 0 7 4' shape-rendering='crispEdges'><path d='M0 0h7v1h-7zM1 1h5v1h-5zM2 2h3v1h-3zM3 3h1v1h-1z' fill='#000'/></svg></div>
<div class='gdd' style='left:424px;top:83px'><svg style='left:3px;top:5px' width='7' height='4' viewBox='0 0 7 4' shape-rendering='crispEdges'><path d='M0 0h7v1h-7zM1 1h5v1h-5zM2 2h3v1h-3zM3 3h1v1h-1z' fill='#000'/></svg></div>
<div class='t' style='left:2.9px;letter-spacing:0.133px;top:101px;'>Year</div>
<div class='gcb' style='left:107px;top:100px'></div>
<div class='gcb' style='left:274px;top:100px'></div>
<div class='gdd' style='left:257px;top:99px'><svg style='left:3px;top:5px' width='7' height='4' viewBox='0 0 7 4' shape-rendering='crispEdges'><path d='M0 0h7v1h-7zM1 1h5v1h-5zM2 2h3v1h-3zM3 3h1v1h-1z' fill='#000'/></svg></div>
<div class='gdd' style='left:424px;top:99px'><svg style='left:3px;top:5px' width='7' height='4' viewBox='0 0 7 4' shape-rendering='crispEdges'><path d='M0 0h7v1h-7zM1 1h5v1h-5zM2 2h3v1h-3zM3 3h1v1h-1z' fill='#000'/></svg></div>
<div class='t' style='left:2.9px;letter-spacing:0.05px;top:117px;'>WKN</div>
<div class='gcb' style='left:107px;top:116px'></div>
<div class='gcb' style='left:274px;top:116px'></div>
<div class='gdd' style='left:257px;top:115px'><svg style='left:3px;top:5px' width='7' height='4' viewBox='0 0 7 4' shape-rendering='crispEdges'><path d='M0 0h7v1h-7zM1 1h5v1h-5zM2 2h3v1h-3zM3 3h1v1h-1z' fill='#000'/></svg></div>
<div class='gdd' style='left:424px;top:115px'><svg style='left:3px;top:5px' width='7' height='4' viewBox='0 0 7 4' shape-rendering='crispEdges'><path d='M0 0h7v1h-7zM1 1h5v1h-5zM2 2h3v1h-3zM3 3h1v1h-1z' fill='#000'/></svg></div>
<div class='t' style='left:1.9px;letter-spacing:0.9px;top:133px;'>ISIN</div>
<div class='gcb' style='left:107px;top:132px'></div>
<div class='gcb' style='left:274px;top:132px'></div>
<div class='gdd' style='left:257px;top:131px'><svg style='left:3px;top:5px' width='7' height='4' viewBox='0 0 7 4' shape-rendering='crispEdges'><path d='M0 0h7v1h-7zM1 1h5v1h-5zM2 2h3v1h-3zM3 3h1v1h-1z' fill='#000'/></svg></div>
<div class='gdd' style='left:424px;top:131px'><svg style='left:3px;top:5px' width='7' height='4' viewBox='0 0 7 4' shape-rendering='crispEdges'><path d='M0 0h7v1h-7zM1 1h5v1h-5zM2 2h3v1h-3zM3 3h1v1h-1z' fill='#000'/></svg></div>
<div class='t' style='left:1.9px;letter-spacing:-0.076px;top:149px;'>Market value [EUR]</div>
<div class='gcb' style='left:107px;top:148px'></div>
<div class='gcb' style='left:274px;top:148px'></div>
<div class='gdd' style='left:257px;top:147px'><svg style='left:3px;top:5px' width='7' height='4' viewBox='0 0 7 4' shape-rendering='crispEdges'><path d='M0 0h7v1h-7zM1 1h5v1h-5zM2 2h3v1h-3zM3 3h1v1h-1z' fill='#000'/></svg></div>
<div class='gdd' style='left:424px;top:147px'><svg style='left:3px;top:5px' width='7' height='4' viewBox='0 0 7 4' shape-rendering='crispEdges'><path d='M0 0h7v1h-7zM1 1h5v1h-5zM2 2h3v1h-3zM3 3h1v1h-1z' fill='#000'/></svg></div>
<div class='t' style='left:1.9px;letter-spacing:-0.367px;top:165px;'>Nominal value</div>
<div class='gcb' style='left:107px;top:164px'></div>
<div class='gcb' style='left:274px;top:164px'></div>
<div class='gdd' style='left:257px;top:163px'><svg style='left:3px;top:5px' width='7' height='4' viewBox='0 0 7 4' shape-rendering='crispEdges'><path d='M0 0h7v1h-7zM1 1h5v1h-5zM2 2h3v1h-3zM3 3h1v1h-1z' fill='#000'/></svg></div>
<div class='gdd' style='left:424px;top:163px'><svg style='left:3px;top:5px' width='7' height='4' viewBox='0 0 7 4' shape-rendering='crispEdges'><path d='M0 0h7v1h-7zM1 1h5v1h-5zM2 2h3v1h-3zM3 3h1v1h-1z' fill='#000'/></svg></div>
<div class='t' style='left:1.9px;letter-spacing:-0.262px;top:181px;'>Remaining term</div>
<div class='gcb' style='left:107px;top:180px'></div>
<div class='gcb' style='left:274px;top:180px'></div>
<div class='gdd' style='left:257px;top:179px'><svg style='left:3px;top:5px' width='7' height='4' viewBox='0 0 7 4' shape-rendering='crispEdges'><path d='M0 0h7v1h-7zM1 1h5v1h-5zM2 2h3v1h-3zM3 3h1v1h-1z' fill='#000'/></svg></div>
<div class='gdd' style='left:424px;top:179px'><svg style='left:3px;top:5px' width='7' height='4' viewBox='0 0 7 4' shape-rendering='crispEdges'><path d='M0 0h7v1h-7zM1 1h5v1h-5zM2 2h3v1h-3zM3 3h1v1h-1z' fill='#000'/></svg></div>
<div class='t' style='left:1.9px;letter-spacing:-0.029px;top:197px;'>Duration</div>
<div class='gcb' style='left:107px;top:196px'></div>
<div class='gcb' style='left:274px;top:196px'></div>
<div class='gdd' style='left:257px;top:195px'><svg style='left:3px;top:5px' width='7' height='4' viewBox='0 0 7 4' shape-rendering='crispEdges'><path d='M0 0h7v1h-7zM1 1h5v1h-5zM2 2h3v1h-3zM3 3h1v1h-1z' fill='#000'/></svg></div>
<div class='gdd' style='left:424px;top:195px'><svg style='left:3px;top:5px' width='7' height='4' viewBox='0 0 7 4' shape-rendering='crispEdges'><path d='M0 0h7v1h-7zM1 1h5v1h-5zM2 2h3v1h-3zM3 3h1v1h-1z' fill='#000'/></svg></div>
<div class='a' style='left:913px;top:1px;width:17px;height:205px;background:linear-gradient(90deg,#e9e7dd 0,#e9e7dd 1px,#fbfbf8 1px,#fdfdfb 16px,#efede4 16px)'></div>
<div class='a' style='left:915px;top:2px;width:13px;height:14px;border-radius:2px;box-shadow:0 0 0 1px #fff,1px 1px 0 1px #b4c8f0;background:linear-gradient(135deg,#cbd9fd,#b3c6f4)'></div>
<svg style='left:915px;top:2px' width='13' height='14' viewBox='0 0 13 14'><path d='M3 9.5 L6.5 6 L10 9.5' fill='none' stroke='#4d6185' stroke-width='2'/></svg>
<div class='a' style='left:915px;top:190px;width:13px;height:14px;border-radius:2px;box-shadow:0 0 0 1px #fff,1px 1px 0 1px #b4c8f0;background:linear-gradient(135deg,#cbd9fd,#b3c6f4)'></div>
<svg style='left:915px;top:190px' width='13' height='14' viewBox='0 0 13 14'><path d='M3 5.5 L6.5 9 L10 5.5' fill='none' stroke='#4d6185' stroke-width='2'/></svg>
<div class='a' style='left:915px;top:19px;width:13px;height:89px;border-radius:2px;box-shadow:0 0 0 1px #fff,1px 1px 0 1px #b4c8f0;background:linear-gradient(90deg,#c9d7fc,#b7c9f6)'></div>
<div class='a' style='left:919px;top:60px;width:6px;height:1px;background:#eef3ff'></div>
<div class='a' style='left:919px;top:62px;width:6px;height:1px;background:#eef3ff'></div>
<div class='a' style='left:919px;top:64px;width:6px;height:1px;background:#eef3ff'></div>
<div class='a' style='left:919px;top:66px;width:6px;height:1px;background:#eef3ff'></div>
</div>
<div class='a' style='left:2px;top:394px;width:1215px;height:1px;background:#ffffff;'></div>
<div class='a' style='left:2px;top:395px;width:1215px;height:1px;background:#8a96a8;'></div>
<div class='a' style='left:2px;top:396px;width:1215px;height:1px;background:#c8d7ea;'></div>
<div class='a' style='left:2px;top:397px;width:1215px;height:1px;background:#8a96a8;'></div>
<div class='a' style='left:2px;top:398px;width:1215px;height:31px;background:#dfdfdf;'></div>
<div class='a' style='left:1066px;top:429px;width:148px;height:86px;background:#dfdfdf;'></div>
<div class='hs' style='left:181px'></div>
<div class='hs' style='left:242px'></div>
<div class='hs' style='left:340px'></div>
<div class='hs' style='left:429px'></div>
<div class='hs' style='left:502px'></div>
<div class='hs' style='left:578px'></div>
<div class='hs' style='left:636px'></div>
<div class='hs' style='left:734px'></div>
<div class='hs' style='left:805px'></div>
<div class='hs' style='left:901px'></div>
<div class='hs' style='left:986px'></div>
<div class='hs' style='left:1065px'></div>
<div class='hs' style='left:1138px'></div>
<div class='hs' style='left:1213px'></div>
<div class='mk' style='left:177px'></div>
<div class='mk' style='left:238px'></div>
<div class='mk' style='left:336px'></div>
<div class='arb' style='left:69.4px;letter-spacing:0.214px;top:400px;'>Security</div>
<div class='arb' style='left:200.15px;letter-spacing:-1.125px;top:400px;'>WKN</div>
<div class='arb' style='left:281.4px;letter-spacing:-0.333px;top:400px;'>ISIN</div>
<div class='arb' style='left:372.9px;letter-spacing:0.167px;top:400px;'>Type</div>
<div class='arb' style='left:443.15px;letter-spacing:0.25px;top:400px;'>Nominal</div>
<div class='arb' style='left:529.15px;letter-spacing:0.25px;top:400px;'>Sec.</div>
<div class='arb' style='left:593.15px;letter-spacing:0.312px;top:400px;'>Price</div>
<div class='arb' style='left:649.4px;letter-spacing:0.455px;top:400px;'>Market value</div>
<div class='arb' style='left:747.15px;letter-spacing:0.643px;top:400px;'>Interest</div>
<div class='arb' style='left:832.15px;letter-spacing:0.85px;top:400px;'>Market</div>
<div class='arb' style='left:914.15px;letter-spacing:0.312px;top:400px;'>Remaining</div>
<div class='arb' style='left:1003.15px;letter-spacing:0.393px;top:400px;'>Maturity</div>
<div class='arb' style='left:1078.15px;letter-spacing:0.236px;top:400px;'>Duration</div>
<div class='arb' style='left:1151.4px;letter-spacing:0.429px;top:400px;'>Modified</div>
<div class='arb' style='left:452.3px;letter-spacing:0.025px;top:414px;'>value</div>
<div class='arb' style='left:516.65px;letter-spacing:0.357px;top:414px;'>currency</div>
<div class='arb' style='left:671.3px;letter-spacing:-0.375px;top:414px;'>[EUR]</div>
<div class='arb' style='left:758.15px;letter-spacing:0.75px;top:414px;'>rate</div>
<div class='arb' style='left:818.15px;letter-spacing:0.512px;top:414px;'>interest rate</div>
<div class='arb' style='left:930.65px;letter-spacing:0.9px;top:414px;'>term</div>
<div class='arb' style='left:1153.4px;letter-spacing:0.286px;top:414px;'>duration</div>
<div class='arb' style='left:10.4px;letter-spacing:-0.25px;top:431px;'>2009-220301</div>
<div class='ar' style='left:24.3px;letter-spacing:-0.008px;top:447px;'>5,625% Bundanl.V.98/01.28</div>
<div class='ar' style='left:184.4px;letter-spacing:0.05px;top:447px;'>113506</div>
<div class='ar' style='left:245.0px;letter-spacing:-0.145px;top:447px;'>DE0001135069</div>
<div class='ar' style='left:343.15px;letter-spacing:-0.15px;top:447px;'>Coupon bond</div>
<div class='ar' style='left:451.3px;letter-spacing:-0.112px;top:447px;'>15.000,00</div>
<div class='ar' style='left:505.4px;letter-spacing:-1.3px;top:447px;'>EUR</div>
<div class='ar' style='left:600.0px;letter-spacing:-0.14px;top:447px;'>147,51</div>
<div class='ar' style='left:683.15px;letter-spacing:-0.062px;top:447px;'>22.905,70</div>
<div class='ar' style='left:771.3px;letter-spacing:0.0px;top:447px;'>5,63%</div>
<div class='ar' style='left:868.15px;letter-spacing:-0.188px;top:447px;'>0,19%</div>
<div class='ar' style='left:956.3px;letter-spacing:0.025px;top:447px;'>15,08</div>
<div class='ar' style='left:990.15px;letter-spacing:-0.194px;top:447px;'>04.01.2028</div>
<div class='ar' style='left:1108.4px;letter-spacing:0.35px;top:447px;'>11,48</div>
<div class='ar' style='left:1173.4px;letter-spacing:0.28px;top:447px;'>11,46%</div>
<div class='ar' style='left:25.3px;letter-spacing:-0.043px;top:463px;'>4,75% Bundanl.V. 08/40</div>
<div class='ar' style='left:184.4px;letter-spacing:0.05px;top:463px;'>113536</div>
<div class='ar' style='left:245.0px;letter-spacing:-0.145px;top:463px;'>DE0001135366</div>
<div class='ar' style='left:343.15px;letter-spacing:-0.15px;top:463px;'>Coupon bond</div>
<div class='ar' style='left:451.3px;letter-spacing:-0.112px;top:463px;'>10.000,00</div>
<div class='ar' style='left:505.4px;letter-spacing:-1.3px;top:463px;'>EUR</div>
<div class='ar' style='left:600.0px;letter-spacing:-0.14px;top:463px;'>150,24</div>
<div class='ar' style='left:683.15px;letter-spacing:0.062px;top:463px;'>15.702,01</div>
<div class='ar' style='left:772.3px;letter-spacing:-0.25px;top:463px;'>4,75%</div>
<div class='ar' style='left:868.15px;letter-spacing:-0.188px;top:463px;'>0,19%</div>
<div class='ar' style='left:956.3px;letter-spacing:0.025px;top:463px;'>27,57</div>
<div class='ar' style='left:990.15px;letter-spacing:-0.194px;top:463px;'>04.07.2040</div>
<div class='ar' style='left:1108.4px;letter-spacing:0.1px;top:463px;'>19,71</div>
<div class='ar' style='left:1173.4px;letter-spacing:0.08px;top:463px;'>19,67%</div>
<div class='a' style='left:1069px;top:477px;width:67px;height:1px;background:#1a1a1a;'></div>
<div class='a' style='left:1142px;top:477px;width:69px;height:1px;background:#1a1a1a;'></div>
<div class='ar' style='left:1108.4px;letter-spacing:0.1px;top:482px;'>14,83</div>
<div class='ar' style='left:1173.4px;letter-spacing:0.08px;top:482px;'>14,80%</div>
<div class='a' style='left:2px;top:496px;width:1215px;height:1px;background:#000;'></div>
<div class='ar' style='left:1108.4px;letter-spacing:0.1px;top:501px;'>14,83</div>
<div class='ar' style='left:1173.4px;letter-spacing:0.08px;top:501px;'>14,80%</div>
<div class='a' style='left:2px;top:537px;width:1215px;height:17px;background:linear-gradient(#f0eee7,#fbfaf6 50%,#fffffb);'></div>
<div class='a' style='left:3px;top:539px;width:14px;height:13px;border-radius:2px;box-shadow:0 0 0 1px #fff,1px 1px 0 1px #b4c8f0;background:linear-gradient(135deg,#cbd9fd,#b3c6f4)'></div>
<svg style='left:3px;top:539px' width='14' height='13' viewBox='0 0 14 13'><path d='M8.5 3 L5 6.5 L8.5 10' fill='none' stroke='#4d6185' stroke-width='2'/></svg>
<div class='a' style='left:20px;top:539px;width:14px;height:13px;border-radius:2px;box-shadow:0 0 0 1px #fff,1px 1px 0 1px #b4c8f0;background:linear-gradient(135deg,#cbd9fd,#b3c6f4)'></div>
<div class='a' style='left:23px;top:542px;width:1px;height:6px;background:#f4f7ff;'></div>
<div class='a' style='left:24px;top:543px;width:1px;height:6px;background:#8fb0f5;'></div>
<div class='a' style='left:25px;top:542px;width:1px;height:6px;background:#f4f7ff;'></div>
<div class='a' style='left:26px;top:543px;width:1px;height:6px;background:#8fb0f5;'></div>
<div class='a' style='left:27px;top:542px;width:1px;height:6px;background:#f4f7ff;'></div>
<div class='a' style='left:28px;top:543px;width:1px;height:6px;background:#8fb0f5;'></div>
<div class='a' style='left:29px;top:542px;width:1px;height:6px;background:#f4f7ff;'></div>
<div class='a' style='left:30px;top:543px;width:1px;height:6px;background:#8fb0f5;'></div>
<div class='a' style='left:1201px;top:539px;width:14px;height:13px;border-radius:2px;box-shadow:0 0 0 1px #fff,1px 1px 0 1px #b4c8f0;background:linear-gradient(135deg,#cbd9fd,#b3c6f4)'></div>
<svg style='left:1201px;top:539px' width='14' height='13' viewBox='0 0 14 13'><path d='M5.5 3 L9 6.5 L5.5 10' fill='none' stroke='#4d6185' stroke-width='2'/></svg>
<div class='a' style='left:2px;top:554px;width:1215px;height:1px;background:#37547f;'></div>
<div class='a' style='left:2px;top:555px;width:1215px;height:21px;background:linear-gradient(#dde5f0,#c3d0e5);'></div>
<div class='a' style='left:2px;top:576px;width:1215px;height:1px;background:#9f9b8e;'></div>
<div class='a' style='left:7px;top:554px;width:37px;height:20px;box-sizing:border-box;border:1px solid #37547f;border-top:none;border-radius:0 0 2px 2px;background:linear-gradient(#fdebda,#f9cba4)'></div>
<div class='t' style='left:12.5px;letter-spacing:0.0px;top:558px;'>Table</div>
<div class='t' style='left:48.15px;letter-spacing:-0.161px;top:558px;'>Duration period</div>
<div class='t' style='left:133.15px;letter-spacing:-0.121px;top:558px;'>Duration</div>
<div class='sep' style='left:128px;top:558px'></div>
<div class='a' style='left:2px;top:577px;width:1215px;height:18px;background:linear-gradient(#e4e1d0 0,#ece9d8 2px,#ece9d8 13px,#e3dfcc 16px,#d2ceba 18px);'></div>
<div class='t' style='left:3.15px;letter-spacing:0.139px;top:581px;'>Objects: 2</div>
<div class='a' style='left:1px;top:595px;width:1217px;height:1px;background:#8a96a8;'></div>
<div class='a' style='left:1217px;top:1px;width:1px;height:595px;background:#8a96a8;'></div>
</div></body></html>
